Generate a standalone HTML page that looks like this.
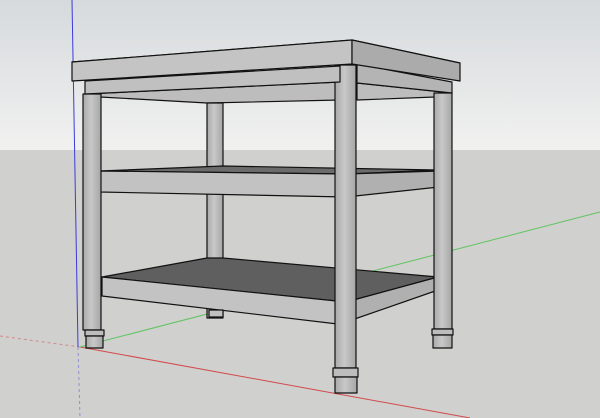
<!DOCTYPE html>
<html><head><style>html,body{margin:0;padding:0;width:600px;height:418px;overflow:hidden}</style></head>
<body>
<svg width="600" height="418" viewBox="0 0 600 418" xmlns="http://www.w3.org/2000/svg">
<defs>
<linearGradient id="sky" x1="0" y1="0" x2="0" y2="1"><stop offset="0" stop-color="#d6dadd"/><stop offset="1" stop-color="#f1f1f0"/></linearGradient>
<linearGradient id="leg" x1="0" y1="0" x2="1" y2="0"><stop offset="0" stop-color="#aaaaaa"/><stop offset="0.45" stop-color="#c8c8c8"/><stop offset="1" stop-color="#a6a6a6"/></linearGradient>
</defs>
<rect width="600" height="150" fill="url(#sky)"/>
<rect y="150" width="600" height="268" fill="#d0d0ce"/>
<line x1="0" y1="336" x2="80" y2="347" stroke="#d08a8a" stroke-width="1" stroke-dasharray="3,3"/>
<line x1="80" y1="347" x2="470" y2="418" stroke="#d24a4a" stroke-width="1"/>
<line x1="80" y1="347" x2="600" y2="212" stroke="#5fc45f" stroke-width="1"/>
<line x1="72" y1="0" x2="78" y2="347" stroke="#3b3bdc" stroke-width="1"/>
<line x1="78" y1="347" x2="80" y2="418" stroke="#9090d0" stroke-width="1" stroke-dasharray="3,3"/>
<g stroke="#111" stroke-width="1.2" stroke-linejoin="round">
<!-- underside strips -->
<polygon points="85,94 340,82 340,100 207,103 100,97" fill="#bdbdbd"/>
<polygon points="357,83 452,93 435,97 357,100" fill="#bdbdbd"/>
<!-- back left leg -->
<rect x="207" y="103" width="16" height="215" fill="url(#leg)"/>
<!-- middle shelf -->
<polygon points="100,171 223,166 437,170 346,174" fill="#6b6b6b"/>
<polygon points="100,171 346,174 346,197 100,192" fill="#c2c2c2"/>
<polygon points="346,174 439,171 439,187 346,197" fill="#b0b0b0"/>
<!-- bottom shelf -->
<polygon points="102,277 207,258 223,258 438,277 346,302" fill="#5f5f5f"/>
<polygon points="102,277 346,302 346,325 102,296" fill="#c3c3c3"/>
<polygon points="346,302 438,277 438,290 346,322" fill="#b0b0b0"/>
<rect x="209" y="310" width="14" height="7" fill="#c0c0c0"/>
<!-- front left leg -->
<rect x="83" y="94" width="18" height="236" fill="url(#leg)"/>
<rect x="85" y="330" width="19" height="6" fill="#bdbdbd"/>
<rect x="86" y="336" width="17" height="12" fill="url(#leg)"/>
<!-- back right leg -->
<rect x="434" y="93" width="18" height="236" fill="url(#leg)"/>
<rect x="432" y="329" width="21" height="6" fill="#bdbdbd"/>
<rect x="433" y="335" width="19" height="13" fill="url(#leg)"/>
<!-- right apron -->
<polygon points="357,64 452,82 452,93 357,83" fill="#b4b4b4"/>
<!-- front right leg -->
<rect x="335" y="65" width="21" height="303" fill="url(#leg)"/>
<rect x="333" y="368" width="25" height="9" fill="#bdbdbd"/>
<rect x="335" y="377" width="22" height="16" fill="url(#leg)"/>
<!-- front apron -->
<polygon points="85,81 340,66 340,82 85,94" fill="#c0c0c0"/>
<!-- top slab -->
<polygon points="72,62 352,40 460,63 352,64" fill="#bdbdbd"/>
<polygon points="72,62 352,40 352,64 72,81" fill="#c4c4c4"/>
<polygon points="352,40 460,63 460,81 352,64" fill="#ababab"/>
</g>
</svg>
</body></html>
